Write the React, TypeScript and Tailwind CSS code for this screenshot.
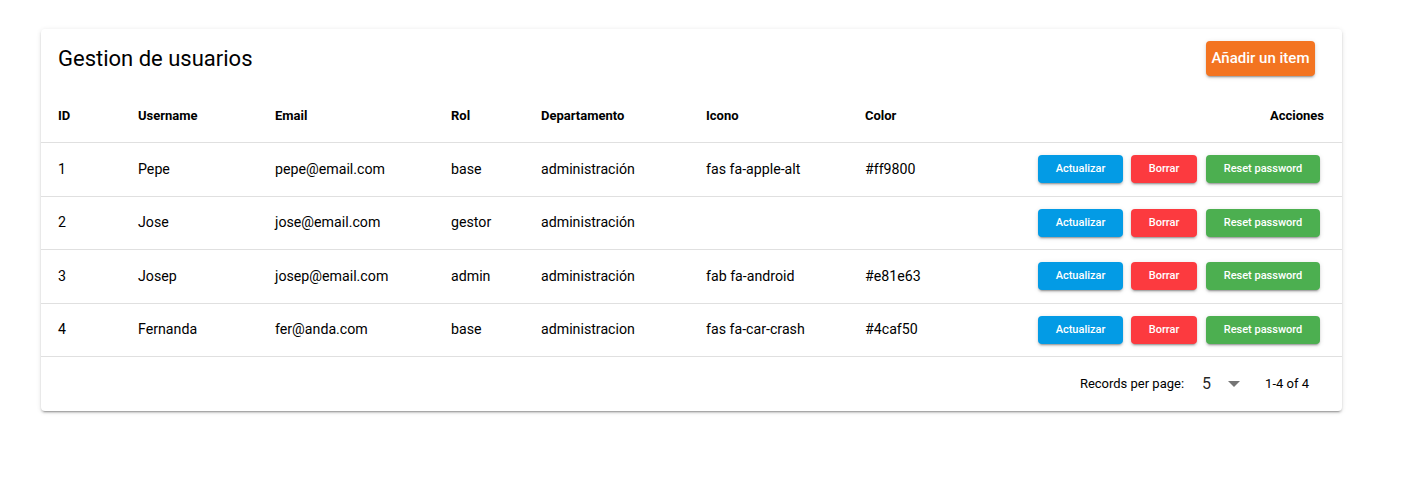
import React from "react";

const rows = [
  { id: 1, user: "Pepe", email: "pepe@email.com", rol: "base", dep: "administración", icon: "fas fa-apple-alt", color: "#ff9800" },
  { id: 2, user: "Jose", email: "jose@email.com", rol: "gestor", dep: "administración", icon: "", color: "" },
  { id: 3, user: "Josep", email: "josep@email.com", rol: "admin", dep: "administración", icon: "fab fa-android", color: "#e81e63" },
  { id: 4, user: "Fernanda", email: "fer@anda.com", rol: "base", dep: "administracion", icon: "fas fa-car-crash", color: "#4caf50" },
];

const btnShadow =
  "shadow-[0_3px_1px_-2px_rgba(0,0,0,0.2),0_2px_2px_0_rgba(0,0,0,0.14),0_1px_5px_0_rgba(0,0,0,0.12)]";

export default function App() {
  return (
    <div className="min-h-[485px] bg-white pt-[29px] pl-[41px]" style={{ fontFamily: "Roboto, 'Noto Sans', sans-serif" }}>
      <div className="w-[1301px] rounded bg-white text-[rgba(0,0,0,0.87)] shadow-[0_3px_1px_-2px_rgba(0,0,0,0.2),0_2px_2px_0_rgba(0,0,0,0.14),0_1px_5px_0_rgba(0,0,0,0.12)]">
        <div className="flex h-[60px] items-center justify-between pl-[17px] pr-[27px]">
          <div className="text-[22px] leading-8 text-black">Gestion de usuarios</div>
          <button className={`mt-[-1px] h-[35px] w-[109px] rounded bg-[#f37421] text-[15px] font-medium text-white ${btnShadow}`}>
            Añadir un item
          </button>
        </div>
        <div className="flex h-[53px] items-center text-[13px] font-bold text-black">
          <div className="w-[81px] pl-[17px]">ID</div>
          <div className="w-[137px] pl-4">Username</div>
          <div className="w-[176px] pl-4">Email</div>
          <div className="w-[90px] pl-4">Rol</div>
          <div className="w-[165px] pl-4">Departamento</div>
          <div className="w-[159px] pl-4">Icono</div>
          <div className="w-[150px] pl-4">Color</div>
          <div className="flex-1 pr-[18px] text-right">Acciones</div>
        </div>
        {rows.map((r) => (
          <div key={r.id} className="flex h-[53.5px] items-center border-t border-[#e0e0e0] text-[14.2px] text-black">
            <div className="w-[81px] pl-[17px]">{r.id}</div>
            <div className="w-[137px] pl-4">{r.user}</div>
            <div className="w-[176px] pl-4">{r.email}</div>
            <div className="w-[90px] pl-4">{r.rol}</div>
            <div className="w-[165px] pl-4">{r.dep}</div>
            <div className="w-[159px] pl-4">{r.icon}</div>
            <div className="w-[150px] pl-4">{r.color}</div>
            <div className="flex flex-1 items-center justify-end gap-2 pr-[22px]">
              <button className={`h-[28px] w-[85px] rounded bg-[#039be5] text-[11px] font-medium text-white ${btnShadow}`}>
                Actualizar
              </button>
              <button className={`h-[28px] w-[66px] rounded bg-[#fc3a3f] text-[11px] font-medium text-white ${btnShadow}`}>
                Borrar
              </button>
              <button className={`ml-[1px] h-[28px] w-[114px] rounded bg-[#4caf50] text-[11px] font-medium text-white ${btnShadow}`}>
                Reset password
              </button>
            </div>
          </div>
        ))}
        <div className="flex h-[55px] items-center justify-end border-t border-[#e0e0e0] pr-[33px] text-[13px] text-black">
          <span>Records per page:</span>
          <span className="ml-[18px] text-[16px] text-[rgba(0,0,0,0.87)]">5</span>
          <svg className="ml-[17px]" width="12" height="6" viewBox="0 0 10 5">
            <path d="M0 0 L5 5 L10 0 Z" fill="#757575" />
          </svg>
          <span className="ml-[25px]">1-4 of 4</span>
        </div>
      </div>
    </div>
  );
}
